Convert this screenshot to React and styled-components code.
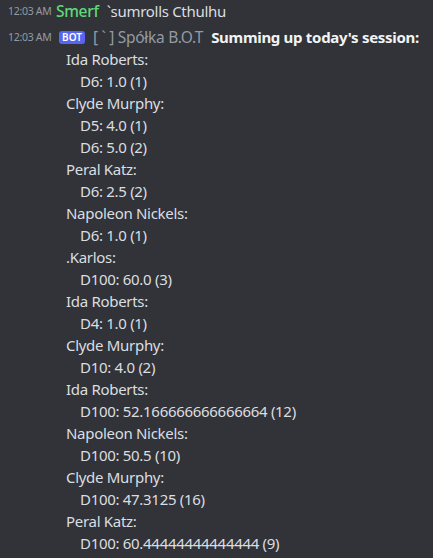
import React from 'react';
import styled, { createGlobalStyle } from 'styled-components';

const GlobalStyle = createGlobalStyle`
  body {
    margin: 0;
    background: #313338;
    font-family: "Noto Sans", "Open Sans", sans-serif;
  }
`;

const summary = [
  ['Ida Roberts', ['D6: 1.0 (1)']],
  ['Clyde Murphy', ['D5: 4.0 (1)', 'D6: 5.0 (2)']],
  ['Peral Katz', ['D6: 2.5 (2)']],
  ['Napoleon Nickels', ['D6: 1.0 (1)']],
  ['.Karlos', ['D100: 60.0 (3)']],
  ['Ida Roberts', ['D4: 1.0 (1)']],
  ['Clyde Murphy', ['D10: 4.0 (2)']],
  ['Ida Roberts', ['D100: 52.166666666666664 (12)']],
  ['Napoleon Nickels', ['D100: 50.5 (10)']],
  ['Clyde Murphy', ['D100: 47.3125 (16)']],
  ['Peral Katz', ['D100: 60.44444444444444 (9)']],
];

export default function App() {
  return (
    <>
      <GlobalStyle />
      <Chat>
        <Message>
          <Time>12:03 AM</Time>
          <Author $color="#5fd977">Smerf</Author>
          <Text>`sumrolls Cthulhu</Text>
        </Message>
        <Message>
          <Time>12:03 AM</Time>
          <Badge>BOT</Badge>
          <Author $color="#949ba4" $light>
            [ ` ] Spółka B.O.T
          </Author>
          <Text $bold>Summing up today's session:</Text>
        </Message>
        <Body>
          {summary.map(([name, rolls], i) => (
            <React.Fragment key={i}>
              <Line>{name}:</Line>
              {rolls.map((r) => (
                <Line key={r} $sub>
                  {r}
                </Line>
              ))}
            </React.Fragment>
          ))}
        </Body>
      </Chat>
    </>
  );
}

const Chat = styled.div`
  padding-left: 8px;
  color: #dbdee1;
  letter-spacing: -0.3px;
`;

const Message = styled.div`
  display: flex;
  align-items: center;
  height: 22px;
  white-space: nowrap;
  & + & {
    margin-top: 4px;
  }
`;

const Time = styled.span`
  flex: 0 0 48px;
  font-size: 10.5px;
  letter-spacing: -0.3px;
  color: #949ba4;
`;

const Author = styled.span`
  font-size: 15.5px;
  font-weight: ${(p) => (p.$light ? 400 : 500)};
  color: ${(p) => p.$color};
  margin-right: 8px;
`;

const Text = styled.span`
  font-size: 15px;
  font-weight: ${(p) => (p.$bold ? 700 : 400)};
  color: ${(p) => (p.$bold ? '#f2f3f5' : '#dbdee1')};
`;

const Badge = styled.span`
  display: inline-flex;
  align-items: center;
  justify-content: center;
  flex: 0 0 26px;
  height: 13px;
  margin: 0 8px 0 3px;
  border-radius: 3px;
  background: #5865f2;
  color: #fff;
  font-size: 10px;
  font-weight: 600;
  letter-spacing: 0;
`;

const Body = styled.div`
  padding-left: 58px;
`;

const Line = styled.div`
  font-size: 15px;
  line-height: 22px;
  padding-left: ${(p) => (p.$sub ? 14 : 0)}px;
  white-space: nowrap;
`;
